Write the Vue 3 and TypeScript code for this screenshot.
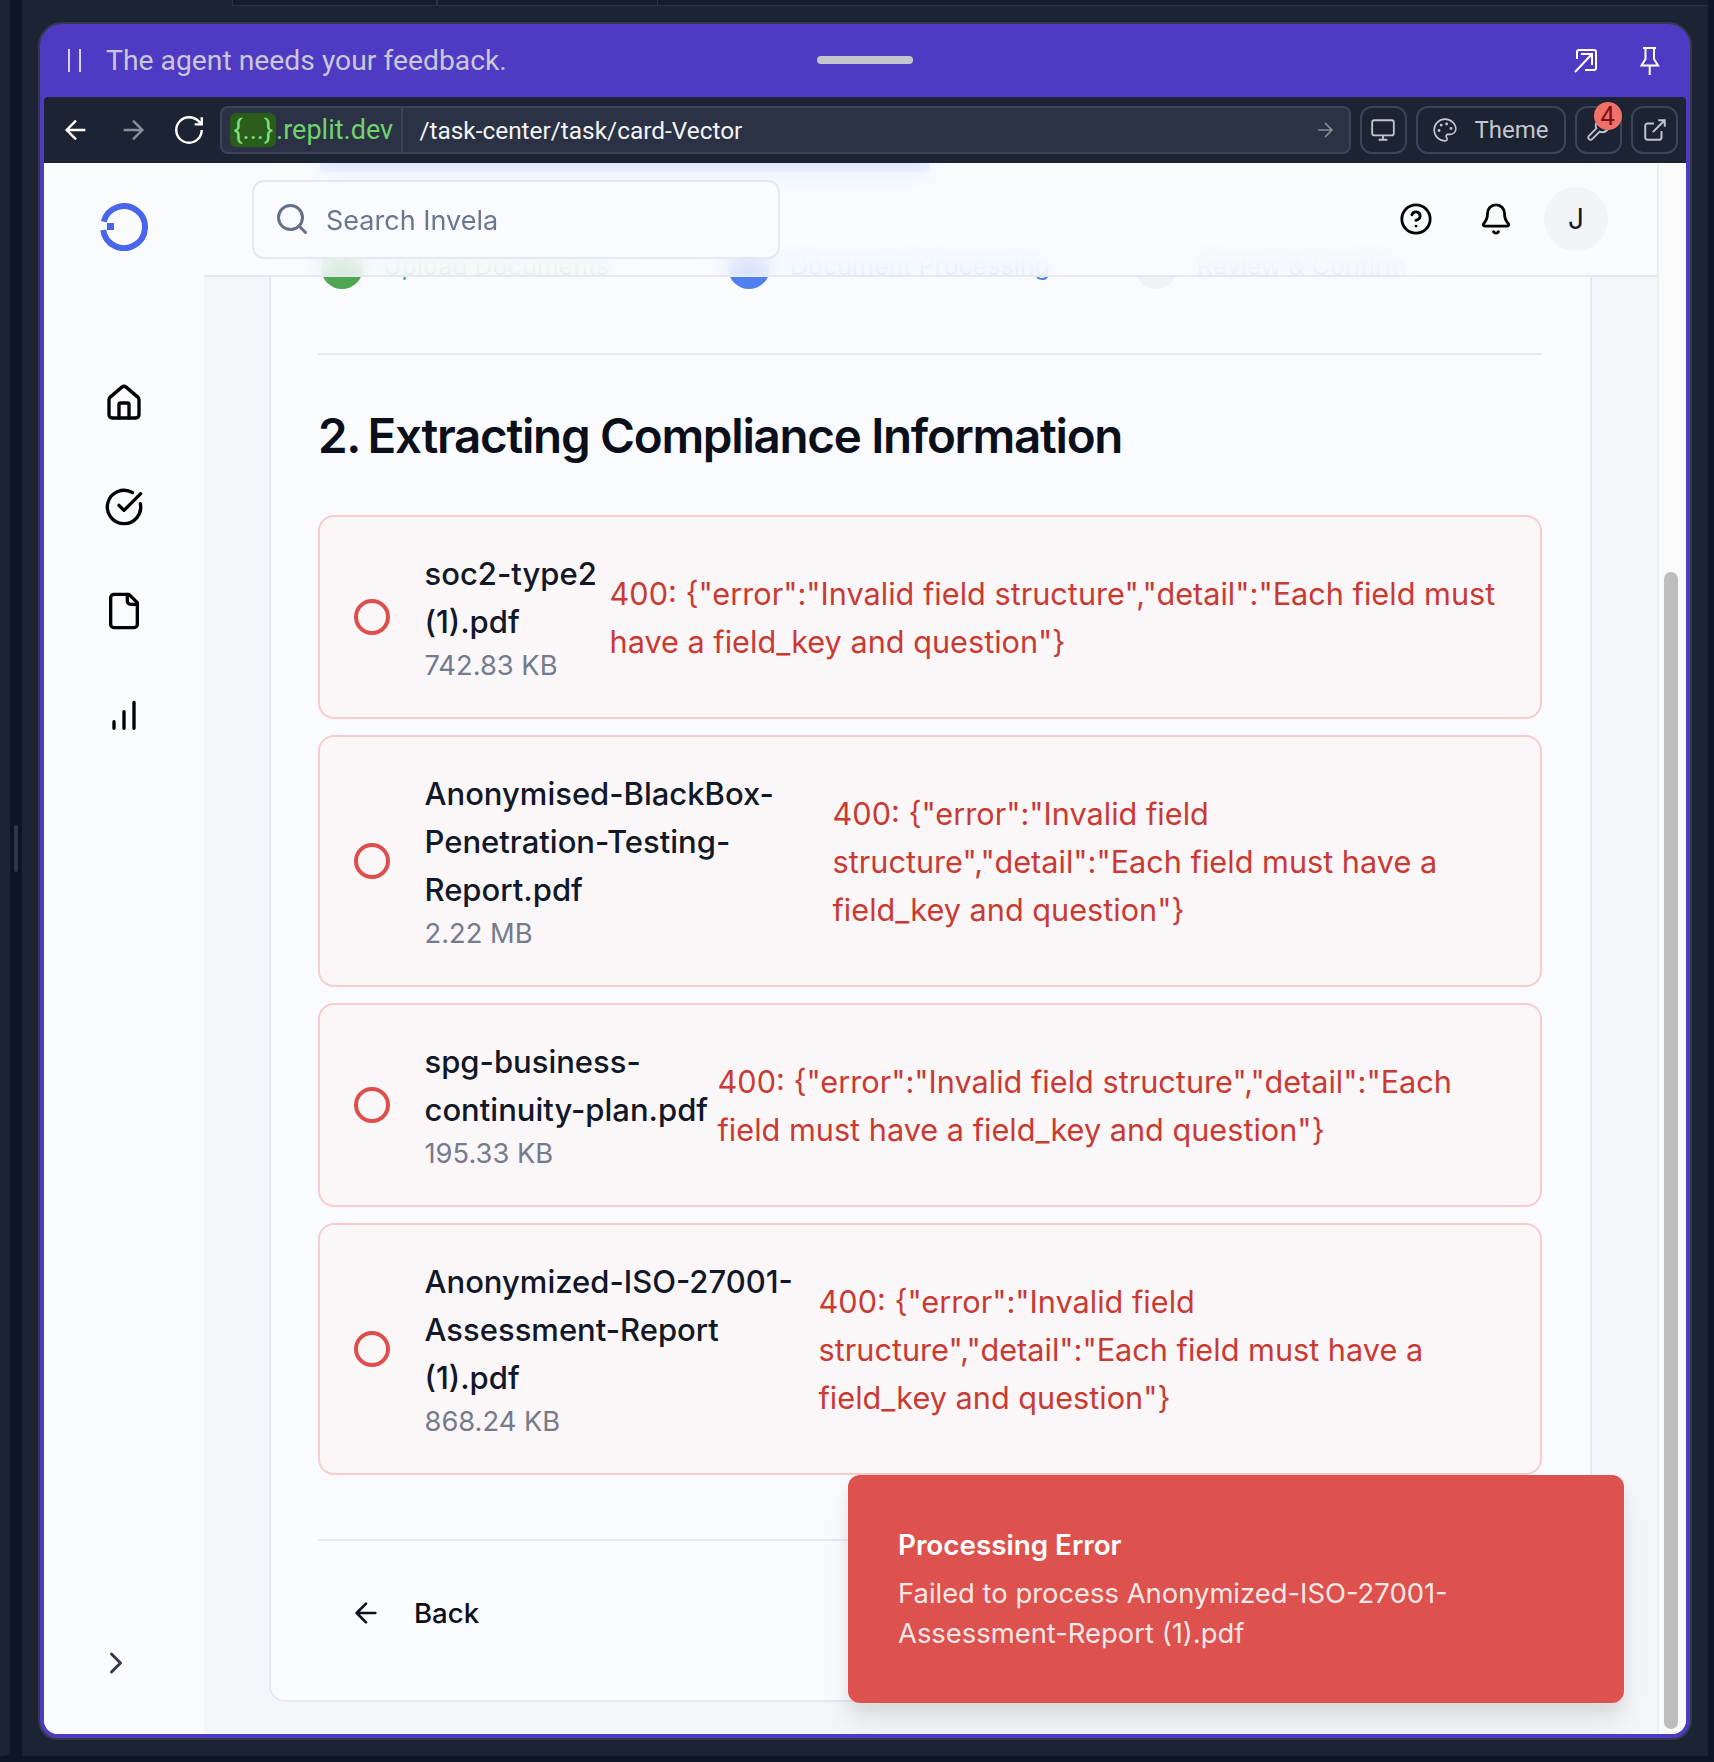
<template>
  <div class="page">
    <div class="left-panel"></div>
    <div class="gutter"><div class="handle"></div></div>
    <div class="workspace">
      <div class="tabs">
        <div class="tab"></div>
        <div class="tab"></div>
      </div>
      <div class="window">
        <div class="agent-bar">
          <div class="agent-left">
            <span class="pause"><i></i><i></i></span>
            <span class="agent-text">The agent needs your feedback.</span>
          </div>
          <div class="drag"></div>
          <div class="agent-right">
            <svg width="28" height="28" viewBox="0 0 28 28" fill="none" stroke="#fff" stroke-width="2">
              <path d="M4 12V5a2 2 0 0 1 2-2h15a2 2 0 0 1 2 2v16a2 2 0 0 1-2 2h-9" />
              <path d="M2 25 19 7M8 7h11v11" />
            </svg>
            <svg width="22" height="31" viewBox="0 0 22 31" fill="none" stroke="#fff" stroke-width="2">
              <path d="M4 3h13M6.500 3v11l-4 6.500H19L15 14V3M10.700 20.500V30" />
            </svg>
          </div>
        </div>

        <div class="browser-bar">
          <button class="nav-btn">
            <svg width="32" height="32" viewBox="0 0 24 24" fill="none" stroke="#fff" stroke-width="1.800"><path d="m12 19-7-7 7-7M19 12H5" /></svg>
          </button>
          <button class="nav-btn">
            <svg width="32" height="32" viewBox="0 0 24 24" fill="none" stroke="#8b8f99" stroke-width="1.800"><path d="M5 12h14M12 5l7 7-7 7" /></svg>
          </button>
          <button class="nav-btn">
            <svg width="34" height="34" viewBox="0 0 24 24" fill="none" stroke="#fff" stroke-width="1.700"><path d="M21 12a9 9 0 1 1-9-9c2.520 0 4.930 1 6.740 2.740L21 8" /><path d="M21 3v5h-5" /></svg>
          </button>
          <div class="address">
            <div class="host">
              <span class="chip">{...}</span><span class="domain">.replit.dev</span>
            </div>
            <span class="path">/task-center/task/card-Vector</span>
            <svg class="go" width="24" height="24" viewBox="0 0 24 24" fill="none" stroke="#8b8f99" stroke-width="1.600"><path d="M5 12h14M12 5l7 7-7 7" /></svg>
          </div>
          <button class="tool-btn">
            <svg width="26" height="26" viewBox="0 0 24 24" fill="none" stroke="#c2c6ce" stroke-width="1.700"><rect x="2" y="3" width="20" height="14" rx="2" /><path d="M8 21h8M12 17v4" /></svg>
          </button>
          <button class="tool-btn theme">
            <svg width="26" height="26" viewBox="0 0 24 24" fill="none" stroke="#c2c6ce" stroke-width="1.500"><path d="M12 22a1 1 0 0 1 0-20 10 9 0 0 1 10 9 5 5 0 0 1-5 5h-2.250a1.750 1.750 0 0 0-1.400 2.800l.3.400a1.750 1.750 0 0 1-1.400 2.800z" /><circle cx="13.500" cy="6.500" r=".6" /><circle cx="17.500" cy="10.500" r=".6" /><circle cx="6.500" cy="12.500" r=".6" /><circle cx="8.500" cy="7.500" r=".6" /></svg>
            <span>Theme</span>
          </button>
          <button class="tool-btn wrench">
            <svg width="26" height="26" viewBox="0 0 24 24" fill="none" stroke="#c2c6ce" stroke-width="1.700"><path d="M14.700 6.300a1 1 0 0 0 0 1.400l1.600 1.600a1 1 0 0 0 1.400 0l3.770-3.770a6 6 0 0 1-7.940 7.940l-6.910 6.910a2.120 2.120 0 0 1-3-3l6.910-6.910a6 6 0 0 1 7.940-7.940l-3.760 3.760z" /></svg>
            <span class="badge">4</span>
          </button>
          <button class="tool-btn">
            <svg width="26" height="26" viewBox="0 0 24 24" fill="none" stroke="#c2c6ce" stroke-width="1.800"><path d="M15 3h6v6M10 14 21 3M18 13v6a2 2 0 0 1-2 2H5a2 2 0 0 1-2-2V8a2 2 0 0 1 2-2h6" /></svg>
          </button>
        </div>

        <div class="app">
          <aside class="sidebar">
            <svg class="logo" width="48" height="48" viewBox="0 0 48 48" fill="none">
              <path d="M3.700 18.700A21 21 0 1 1 3.200 27" stroke="#4965ec" stroke-width="6" />
              <rect x="7" y="20" width="7" height="7" fill="#4965ec" />
            </svg>
            <nav class="side-nav">
              <svg width="40" height="40" viewBox="0 0 24 24" fill="none" stroke="#000" stroke-width="2" stroke-linecap="round" stroke-linejoin="round"><path d="M15 21v-8a1 1 0 0 0-1-1h-4a1 1 0 0 0-1 1v8" /><path d="M3 10a2 2 0 0 1 .709-1.528l7-5.999a2 2 0 0 1 2.582 0l7 5.999A2 2 0 0 1 21 10v9a2 2 0 0 1-2 2H5a2 2 0 0 1-2-2z" /></svg>
              <svg width="40" height="40" viewBox="0 0 24 24" fill="none" stroke="#000" stroke-width="2" stroke-linecap="round" stroke-linejoin="round"><path d="M21.801 10A10 10 0 1 1 17 3.335" /><path d="m9 11 3 3L22 4" /></svg>
              <svg width="40" height="40" viewBox="0 0 24 24" fill="none" stroke="#000" stroke-width="2" stroke-linecap="round" stroke-linejoin="round"><path d="M15 2H6a2 2 0 0 0-2 2v16a2 2 0 0 0 2 2h12a2 2 0 0 0 2-2V7Z" /><path d="M14 2v4a2 2 0 0 0 2 2h4" /></svg>
              <svg width="40" height="40" viewBox="0 0 24 24" fill="none" stroke="#000" stroke-width="2" stroke-linecap="round"><path d="M6 20v-4M12 20V10M18 20V4.500" /></svg>
            </nav>
            <div class="collapse">
              <svg width="36" height="36" viewBox="0 0 24 24" fill="none" stroke="#333a4a" stroke-width="2" stroke-linecap="round" stroke-linejoin="round"><path d="m9 18 6-6-6-6" /></svg>
            </div>
          </aside>

          <main class="main">
            <section class="card">
              <div class="banner"></div>
              <div class="stepper">
                <div v-for="step in steps" :key="step.label" class="step" :class="step.tone">
                  <span class="step-dot"></span>
                  <span class="step-label">{{ step.label }}</span>
                </div>
              </div>
              <div class="divider"></div>
              <h2 class="title"><span class="title-num">2.</span> Extracting Compliance Information</h2>
              <div class="files">
                <div v-for="file in files" :key="file.name" class="file">
                  <span class="ring"></span>
                  <div class="file-info" :style="{ width: file.nameWidth + 'px' }">
                    <div class="file-name">{{ file.name }}</div>
                    <div class="file-size">{{ file.size }}</div>
                  </div>
                  <div class="file-error">{{ errorText }}</div>
                </div>
              </div>
              <div class="divider low"></div>
              <div class="footer">
                <button class="back">
                  <svg width="32" height="32" viewBox="0 0 24 24" fill="none" stroke="#0b0f19" stroke-width="2" stroke-linecap="round" stroke-linejoin="round"><path d="m12 19-7-7 7-7M19 12H5" /></svg>
                  <span>Back</span>
                </button>
              </div>
            </section>
          </main>

          <div class="scrollbar"><div class="thumb"></div></div>

          <header class="topbar">
            <div class="search">
              <svg width="36" height="36" viewBox="0 0 24 24" fill="none" stroke="#64708a" stroke-width="2" stroke-linecap="round"><circle cx="11" cy="11" r="8" /><path d="m21 21-4.300-4.300" /></svg>
              <span>Search Invela</span>
            </div>
            <div class="top-actions">
              <button class="top-btn">
                <svg width="34" height="34" viewBox="0 0 24 24" fill="none" stroke="#000" stroke-width="2" stroke-linecap="round" stroke-linejoin="round"><circle cx="12" cy="12" r="10" /><path d="M9.090 9a3 3 0 0 1 5.830 1c0 2-3 3-3 3M12 17h.01" /></svg>
              </button>
              <button class="top-btn">
                <svg width="34" height="34" viewBox="0 0 24 24" fill="none" stroke="#000" stroke-width="2" stroke-linecap="round" stroke-linejoin="round"><path d="M10.268 21a2 2 0 0 0 3.464 0" /><path d="M3.262 15.326A1 1 0 0 0 4 17h16a1 1 0 0 0 .74-1.673C19.410 13.956 18 12.499 18 8A6 6 0 0 0 6 8c0 4.499-1.411 5.956-2.738 7.326" /></svg>
              </button>
              <div class="avatar">J</div>
            </div>
          </header>

          <div class="toast">
            <div class="toast-title">Processing Error</div>
            <div class="toast-desc">Failed to process Anonymized-ISO-27001-Assessment-Report (1).pdf</div>
          </div>
        </div>
      </div>
    </div>
  </div>
</template>

<script setup lang="ts">
interface UploadedFile {
  name: string
  size: string
  nameWidth: number
}

const errorText = '400: {"error":"Invalid field structure","detail":"Each field must have a field_key and question"}'

const steps = [
  { label: 'Upload Documents', tone: 'green' },
  { label: 'Document Processing', tone: 'blue' },
  { label: 'Review & Confirm', tone: 'grey' }
]

const files: UploadedFile[] = [
  { name: 'soc2-type2 (1).pdf', size: '742.83 KB', nameWidth: 185 },
  { name: 'Anonymised-BlackBox-Penetration-Testing-Report.pdf', size: '2.22 MB', nameWidth: 408 },
  { name: 'spg-business-continuity-plan.pdf', size: '195.33 KB', nameWidth: 293 },
  { name: 'Anonymized-ISO-27001-Assessment-Report (1).pdf', size: '868.24 KB', nameWidth: 394 }
]
</script>

<style>
html,
body {
  margin: 0;
  background: #0e1525;
}
</style>

<style scoped>
.page {
  width: 1714px;
  height: 1762px;
  display: flex;
  background: #0e1525;
  overflow: hidden;
  font-family: Inter, "Liberation Sans", sans-serif;
}
button {
  border: none;
  background: none;
  padding: 0;
  font: inherit;
  color: inherit;
}
svg {
  display: block;
  flex-shrink: 0;
}
.left-panel {
  width: 10px;
  height: 1756px;
  background: #1c2333;
  border-bottom-right-radius: 6px;
}
.gutter {
  width: 12px;
  display: flex;
  justify-content: center;
  padding-top: 825px;
}
.handle {
  width: 4px;
  height: 47px;
  border-radius: 2px;
  background: #2e3648;
}
.workspace {
  width: 1686px;
  height: 1756px;
  background: #1c2333;
  display: flex;
  flex-direction: column;
  align-items: flex-start;
  padding-left: 16px;
  box-sizing: border-box;
}
.tabs {
  height: 6px;
  margin-left: 194px;
  width: calc(100% - 194px);
  display: flex;
  background: #161c2b;
  border-bottom: 1px solid #2b3245;
  box-sizing: border-box;
}
.tab {
  width: 203px;
  border-left: 1px solid #2b3245;
  border-right: 1px solid #2b3245;
  margin-right: 16px;
}
.tab + .tab {
  margin-left: -16px;
  width: 219px;
}
.window {
  margin-top: 16px;
  width: 1654px;
  height: 1718px;
  box-sizing: border-box;
  border: 2px solid #333a4a;
  border-radius: 24px 24px 20px 20px;
  background: #4f3ac4;
  padding: 0 4px 4px;
  display: flex;
  flex-direction: column;
  overflow: hidden;
}
.agent-bar {
  height: 73px;
  display: flex;
  align-items: center;
  flex-shrink: 0;
}
.agent-left,
.agent-right {
  flex: 1;
  display: flex;
  align-items: center;
}
.agent-left {
  padding-left: 24px;
}
.pause {
  display: flex;
  gap: 9px;
  margin-right: 25px;
}
.pause i {
  display: block;
  width: 2px;
  height: 23px;
  background: #d5d2ee;
}
.agent-text {
  font-family: Roboto, sans-serif;
  font-size: 28.300px;
  color: #c8c8d6;
}
.drag {
  width: 96px;
  height: 8px;
  margin-bottom: 2px;
  border-radius: 4px;
  background: #c4c6cc;
}
.agent-right {
  justify-content: flex-end;
  gap: 38px;
  padding-right: 25px;
}
.browser-bar {
  height: 66px;
  flex-shrink: 0;
  background: #1c2333;
  display: flex;
  align-items: center;
  padding-left: 4px;
  padding-right: 8px;
  box-sizing: border-box;
  border-radius: 4px 4px 0 0;
}
.nav-btn {
  width: 56.500px;
  display: flex;
  justify-content: center;
}
.address {
  margin-left: 3px;
  margin-right: -1px;
  width: 1131px;
  height: 48px;
  box-sizing: border-box;
  border: 2px solid #3c445c;
  border-radius: 8px;
  background: #2b3245;
  display: flex;
  align-items: center;
  font-family: Roboto, sans-serif;
}
.host {
  width: 181px;
  height: 100%;
  padding-left: 8px;
  display: flex;
  align-items: center;
  box-sizing: border-box;
  border-right: 2px solid #3c445c;
  font-size: 27px;
}
.chip {
  height: 34px;
  line-height: 34px;
  padding: 0 3px;
  border-radius: 6px;
  background: #2a5c1c;
  color: #7fe07a;
}
.domain {
  color: #6fd46a;
}
.path {
  margin-left: 16px;
  color: #f2f3f5;
  font-size: 24.400px;
}
.go {
  margin-left: auto;
  margin-right: 12px;
}
.tool-btn {
  position: relative;
  margin-left: 9.500px;
  width: 47px;
  height: 48px;
  box-sizing: border-box;
  border: 2px solid #3c445c;
  border-radius: 12px;
  display: flex;
  align-items: center;
  justify-content: center;
  flex-shrink: 0;
}
.theme {
  width: 150px;
  margin-left: 9px;
  margin-right: -0.500px;
  gap: 16px;
  color: #c2c6ce;
  font-family: Roboto, sans-serif;
  font-size: 24px;
}
.badge {
  position: absolute;
  left: 17px;
  top: -6px;
  width: 28px;
  height: 28px;
  border-radius: 50%;
  background: #f0706a;
  color: #7a1010;
  font-family: Roboto, sans-serif;
  font-size: 26px;
  line-height: 28px;
  text-align: center;
}
.app {
  position: relative;
  flex: 1;
  min-height: 0;
  display: flex;
  overflow: hidden;
  border-radius: 0 0 14px 14px;
  background: #fafbff;
}
.sidebar {
  width: 160px;
  flex-shrink: 0;
  background: #fafbff;
  display: flex;
  flex-direction: column;
  align-items: center;
}
.logo {
  margin-top: 40px;
}
.side-nav {
  margin-top: 132px;
  display: flex;
  flex-direction: column;
  gap: 64px;
}
.collapse {
  margin-top: auto;
  align-self: flex-start;
  padding: 0 0 53px 54px;
}
.main {
  flex: 1;
  min-width: 0;
  background: #f5f6fa;
  display: flex;
  flex-direction: column;
  justify-content: flex-end;
  padding: 0 65px 32px 65px;
  overflow: hidden;
}
.card {
  flex-shrink: 0;
  box-sizing: border-box;
  background: #fafbff;
  border: 2px solid #e5e8ee;
  border-radius: 16px;
  padding: 40px 48px 0 47px;
}
.banner {
  width: 609px;
  height: 9px;
  margin-left: 2px;
  background: #4f80f0;
}
.stepper {
  margin-top: 75px;
  padding-left: 3px;
  display: flex;
  margin-bottom: 64px;
}
.step {
  width: 408.500px;
  display: flex;
  align-items: center;
  gap: 20px;
  font-size: 25px;
  height: 42px;
}
.step-dot {
  width: 42px;
  height: 42px;
  border-radius: 50%;
}
.step-label {
  line-height: 42px;
  margin-top: -4px;
  white-space: nowrap;
}
.green .step-dot {
  background: #4ea852;
}
.green {
  color: #4ea852;
}
.blue .step-dot {
  background: #4f80f0;
}
.blue {
  color: #4f80f0;
}
.grey .step-dot {
  background: #f1f2f5;
}
.grey {
  color: #8a8f9a;
}
.divider {
  height: 2px;
  background: #e5e8ee;
}
.title {
  margin: 49px 0 47px;
  font-size: 47.500px;
  line-height: 64px;
  font-weight: 600;
  letter-spacing: -1.280px;
  color: #0b0f19;
}
.title-num {
  margin-right: -3.400px;
}
.files {
  display: flex;
  flex-direction: column;
  gap: 16px;
}
.file {
  display: flex;
  align-items: center;
  box-sizing: border-box;
  border: 2px solid #f6cdcb;
  border-radius: 16px;
  background: #fbf6f8;
  padding: 33px 34px 32px;
}
.ring {
  width: 36px;
  height: 36px;
  box-sizing: border-box;
  border: 4px solid #dd4f4c;
  border-radius: 50%;
  flex-shrink: 0;
  margin-right: 34.500px;
  margin-bottom: 2px;
}
.file-info {
  flex-shrink: 0;
  box-sizing: border-box;
  padding-right: 8px;
}
.file-name {
  font-size: 31px;
  line-height: 48px;
  font-weight: 500;
  color: #111827;
}
.file-size {
  font-size: 27.300px;
  line-height: 39px;
  color: #737b8c;
}
.file-error {
  flex: 1;
  min-width: 0;
  font-size: 30.660px;
  line-height: 48px;
  color: #c93a33;
}
.divider.low {
  margin-top: 64px;
}
.footer {
  height: 159px;
  padding-top: 48px;
  box-sizing: border-box;
}
.back {
  height: 48px;
  display: flex;
  align-items: center;
  gap: 32px;
  padding-left: 32px;
  font-size: 27.600px;
  font-weight: 500;
  color: #0b0f19;
}
.scrollbar {
  width: 29px;
  flex-shrink: 0;
  box-sizing: border-box;
  border-left: 2px solid #ebedf0;
  background: #fafafa;
  padding: 409px 8px 5px 5px;
}
.thumb {
  height: 100%;
  border-radius: 7px;
  background: #bdbdbd;
}
.topbar {
  position: absolute;
  left: 160px;
  right: 29px;
  top: 0;
  height: 114px;
  box-sizing: border-box;
  padding: 0 49px 0 48px;
  display: flex;
  align-items: center;
  justify-content: space-between;
  border-bottom: 2px solid #e5e8ee;
  background: rgba(250, 251, 255, 0.8);
  backdrop-filter: blur(12px);
}
.search {
  width: 528px;
  height: 79px;
  box-sizing: border-box;
  border: 2px solid #e5e8ee;
  border-radius: 12px;
  background: #fafbff;
  padding-left: 20px;
  display: flex;
  align-items: center;
  gap: 16px;
  font-size: 27px;
  color: #6b7690;
}
.search span {
  padding-top: 2px;
}
.top-actions {
  display: flex;
  align-items: center;
  gap: 16px;
}
.top-btn {
  width: 64px;
  height: 64px;
  display: flex;
  align-items: center;
  justify-content: center;
}
.avatar {
  width: 64px;
  height: 64px;
  border-radius: 50%;
  background: #f2f4f8;
  display: flex;
  align-items: center;
  justify-content: center;
  font-size: 28px;
  color: #111827;
}
.toast {
  position: absolute;
  right: 62px;
  bottom: 31px;
  width: 776px;
  box-sizing: border-box;
  padding: 50px 51px 50px 50px;
  border-radius: 12px;
  background: #dd524e;
  color: #fff;
  box-shadow: 0 20px 30px rgba(0, 0, 0, 0.08), 0 8px 12px rgba(0, 0, 0, 0.05);
}
.toast-title {
  font-size: 27.800px;
  line-height: 40px;
  font-weight: 600;
}
.toast-desc {
  margin-top: 8px;
  font-size: 27.400px;
  line-height: 40px;
  color: rgba(255, 255, 255, 0.88);
}
</style>
